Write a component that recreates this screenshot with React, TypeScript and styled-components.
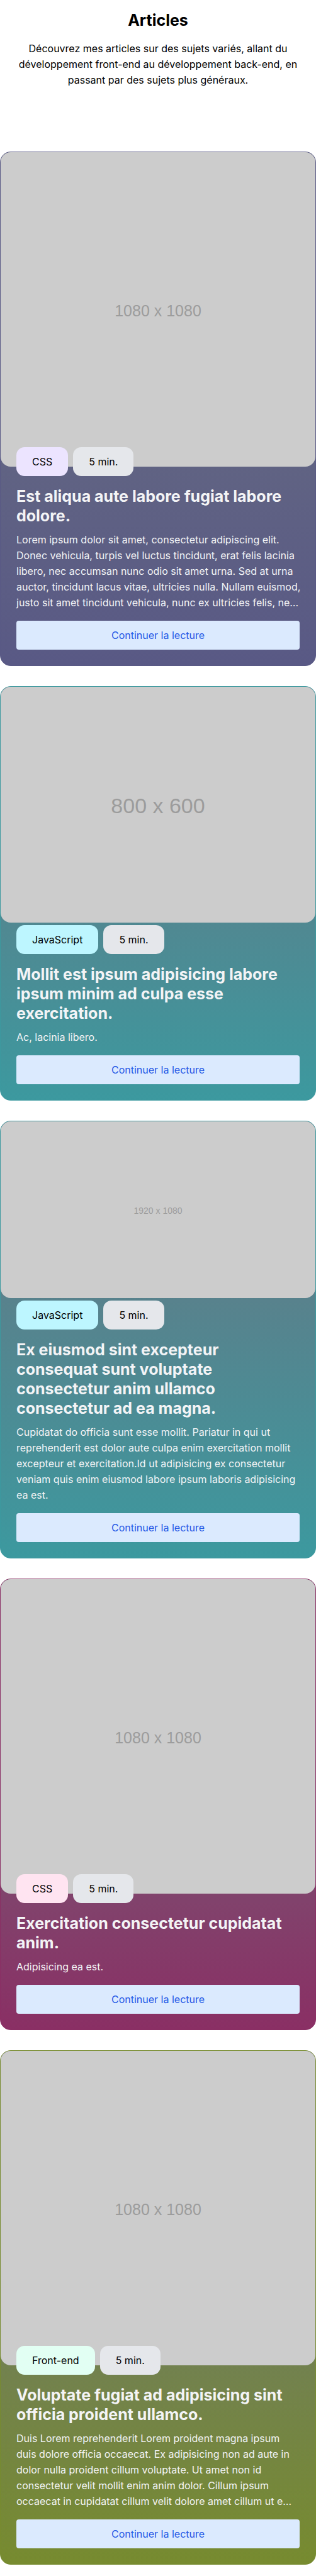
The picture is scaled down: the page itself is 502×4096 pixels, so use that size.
import React from "react";
import styled, { createGlobalStyle } from "styled-components";

const GlobalStyle = createGlobalStyle`
  *, *::before, *::after { box-sizing: border-box; }
  body {
    margin: 0;
    background: #ffffff;
    color: #000000;
    font-family: Inter, "Liberation Sans", sans-serif;
    font-size: 16px;
    line-height: 25px;
  }
  h1, h2, p { margin: 0; }
`;

const Page = styled.main`
  display: flex;
  flex-direction: column;
  padding: 17px 0;
`;

const Header = styled.header`
  display: flex;
  flex-direction: column;
  gap: 17px;
  padding: 0 17px;
  margin-bottom: 101px;
  text-align: center;
`;

const PageTitle = styled.h1`
  font-size: 25px;
  line-height: 31px;
  font-weight: 700;
`;

const CardList = styled.section`
  display: flex;
  flex-direction: column;
  gap: 32px;
`;

const Card = styled.article<{ $tone: string }>`
  border: 1px solid ${(p) => p.$tone};
  border-radius: 17px;
  background: linear-gradient(to bottom, #6b7280, ${(p) => p.$tone}) border-box;
  color: #f3f4f6;
`;

const Cover = styled.div<{ $ratio: string; $size: number }>`
  display: flex;
  align-items: center;
  justify-content: center;
  aspect-ratio: ${(p) => p.$ratio};
  padding-top: 4px;
  border-radius: 16px;
  background: #cccccc;
  color: #9c9c9c;
  font-family: "Liberation Sans", Arial, sans-serif;
  font-size: ${(p) => p.$size}px;
`;

const Body = styled.div<{ $overlap: boolean }>`
  position: relative;
  display: flex;
  flex-direction: column;
  margin-top: ${(p) => (p.$overlap ? "-31px" : "4px")};
  padding: 0 25px 25px;
`;

const Tags = styled.div`
  display: flex;
  gap: 8px;
  margin-bottom: 17px;
`;

const Tag = styled.span<{ $fill: string }>`
  display: flex;
  align-items: center;
  height: 46px;
  padding: 0 25px;
  border-radius: 13px;
  background: ${(p) => p.$fill};
  color: #000000;
`;

const CardTitle = styled.h2`
  margin-bottom: 10px;
  font-size: 25px;
  line-height: 31px;
  font-weight: 700;
`;

const Excerpt = styled.p`
  margin: 0 -4px 16px 0;
`;

const ReadMore = styled.a`
  display: flex;
  align-items: center;
  justify-content: center;
  height: 46px;
  border-radius: 4px;
  background: #dbeafe;
  color: #2457e6;
  text-decoration: none;
`;

interface Article {
  tone: string;
  cover: { label: string; ratio: string; size: number };
  overlap: boolean;
  category: string;
  categoryFill: string;
  title: string;
  excerpt: string;
}

const articles: Article[] = [
  {
    tone: "#595985",
    cover: { label: "1080 x 1080", ratio: "1 / 1", size: 25 },
    overlap: true,
    category: "CSS",
    categoryFill: "#ece4ff",
    title: "Est aliqua aute labore fugiat labore dolore.",
    excerpt:
      "Lorem ipsum dolor sit amet, consectetur adipiscing elit. Donec vehicula, turpis vel luctus tincidunt, erat felis lacinia libero, nec accumsan nunc odio sit amet urna. Sed at urna auctor, tincidunt lacus vitae, ultricies nulla. Nullam euismod, justo sit amet tincidunt vehicula, nunc ex ultricies felis, ne…",
  },
  {
    tone: "#3c999f",
    cover: { label: "800 x 600", ratio: "4 / 3", size: 34 },
    overlap: false,
    category: "JavaScript",
    categoryFill: "#bdf6ff",
    title: "Mollit est ipsum adipisicing labore ipsum minim ad culpa esse exercitation.",
    excerpt: "Ac, lacinia libero.",
  },
  {
    tone: "#3c999f",
    cover: { label: "1920 x 1080", ratio: "16 / 9", size: 14 },
    overlap: false,
    category: "JavaScript",
    categoryFill: "#bdf6ff",
    title: "Ex eiusmod sint excepteur consequat sunt voluptate consectetur anim ullamco consectetur ad ea magna.",
    excerpt:
      "Cupidatat do officia sunt esse mollit. Pariatur in qui ut reprehenderit est dolor aute culpa enim exercitation mollit excepteur et exercitation.Id ut adipisicing ex consectetur veniam quis enim eiusmod labore ipsum laboris adipisicing ea est.",
  },
  {
    tone: "#8a2f64",
    cover: { label: "1080 x 1080", ratio: "1 / 1", size: 25 },
    overlap: true,
    category: "CSS",
    categoryFill: "#ffe4f1",
    title: "Exercitation consectetur cupidatat anim.",
    excerpt: "Adipisicing ea est.",
  },
  {
    tone: "#778b2f",
    cover: { label: "1080 x 1080", ratio: "1 / 1", size: 25 },
    overlap: true,
    category: "Front-end",
    categoryFill: "#e2fff3",
    title: "Voluptate fugiat ad adipisicing sint officia proident ullamco.",
    excerpt:
      "Duis Lorem reprehenderit Lorem proident magna ipsum duis dolore officia occaecat. Ex adipisicing non ad aute in dolor nulla proident cillum voluptate. Ut amet non id consectetur velit mollit enim anim dolor. Cillum ipsum occaecat in cupidatat cillum velit dolore amet cillum ut e…",
  },
];

function ArticleCard({ article }: { article: Article }) {
  const { cover } = article;
  return (
    <Card $tone={article.tone}>
      <Cover $ratio={cover.ratio} $size={cover.size}>
        {cover.label}
      </Cover>
      <Body $overlap={article.overlap}>
        <Tags>
          <Tag $fill={article.categoryFill}>{article.category}</Tag>
          <Tag $fill="#e5e7eb">5 min.</Tag>
        </Tags>
        <CardTitle>{article.title}</CardTitle>
        <Excerpt>{article.excerpt}</Excerpt>
        <ReadMore href="#">Continuer la lecture</ReadMore>
      </Body>
    </Card>
  );
}

export default function App() {
  return (
    <>
      <GlobalStyle />
      <Page>
        <Header>
          <PageTitle>Articles</PageTitle>
          <p>
            Découvrez mes articles sur des sujets variés, allant du développement front-end au
            développement back-end, en passant par des sujets plus généraux.
          </p>
        </Header>
        <CardList>
          {articles.map((article) => (
            <ArticleCard key={article.title} article={article} />
          ))}
        </CardList>
      </Page>
    </>
  );
}
